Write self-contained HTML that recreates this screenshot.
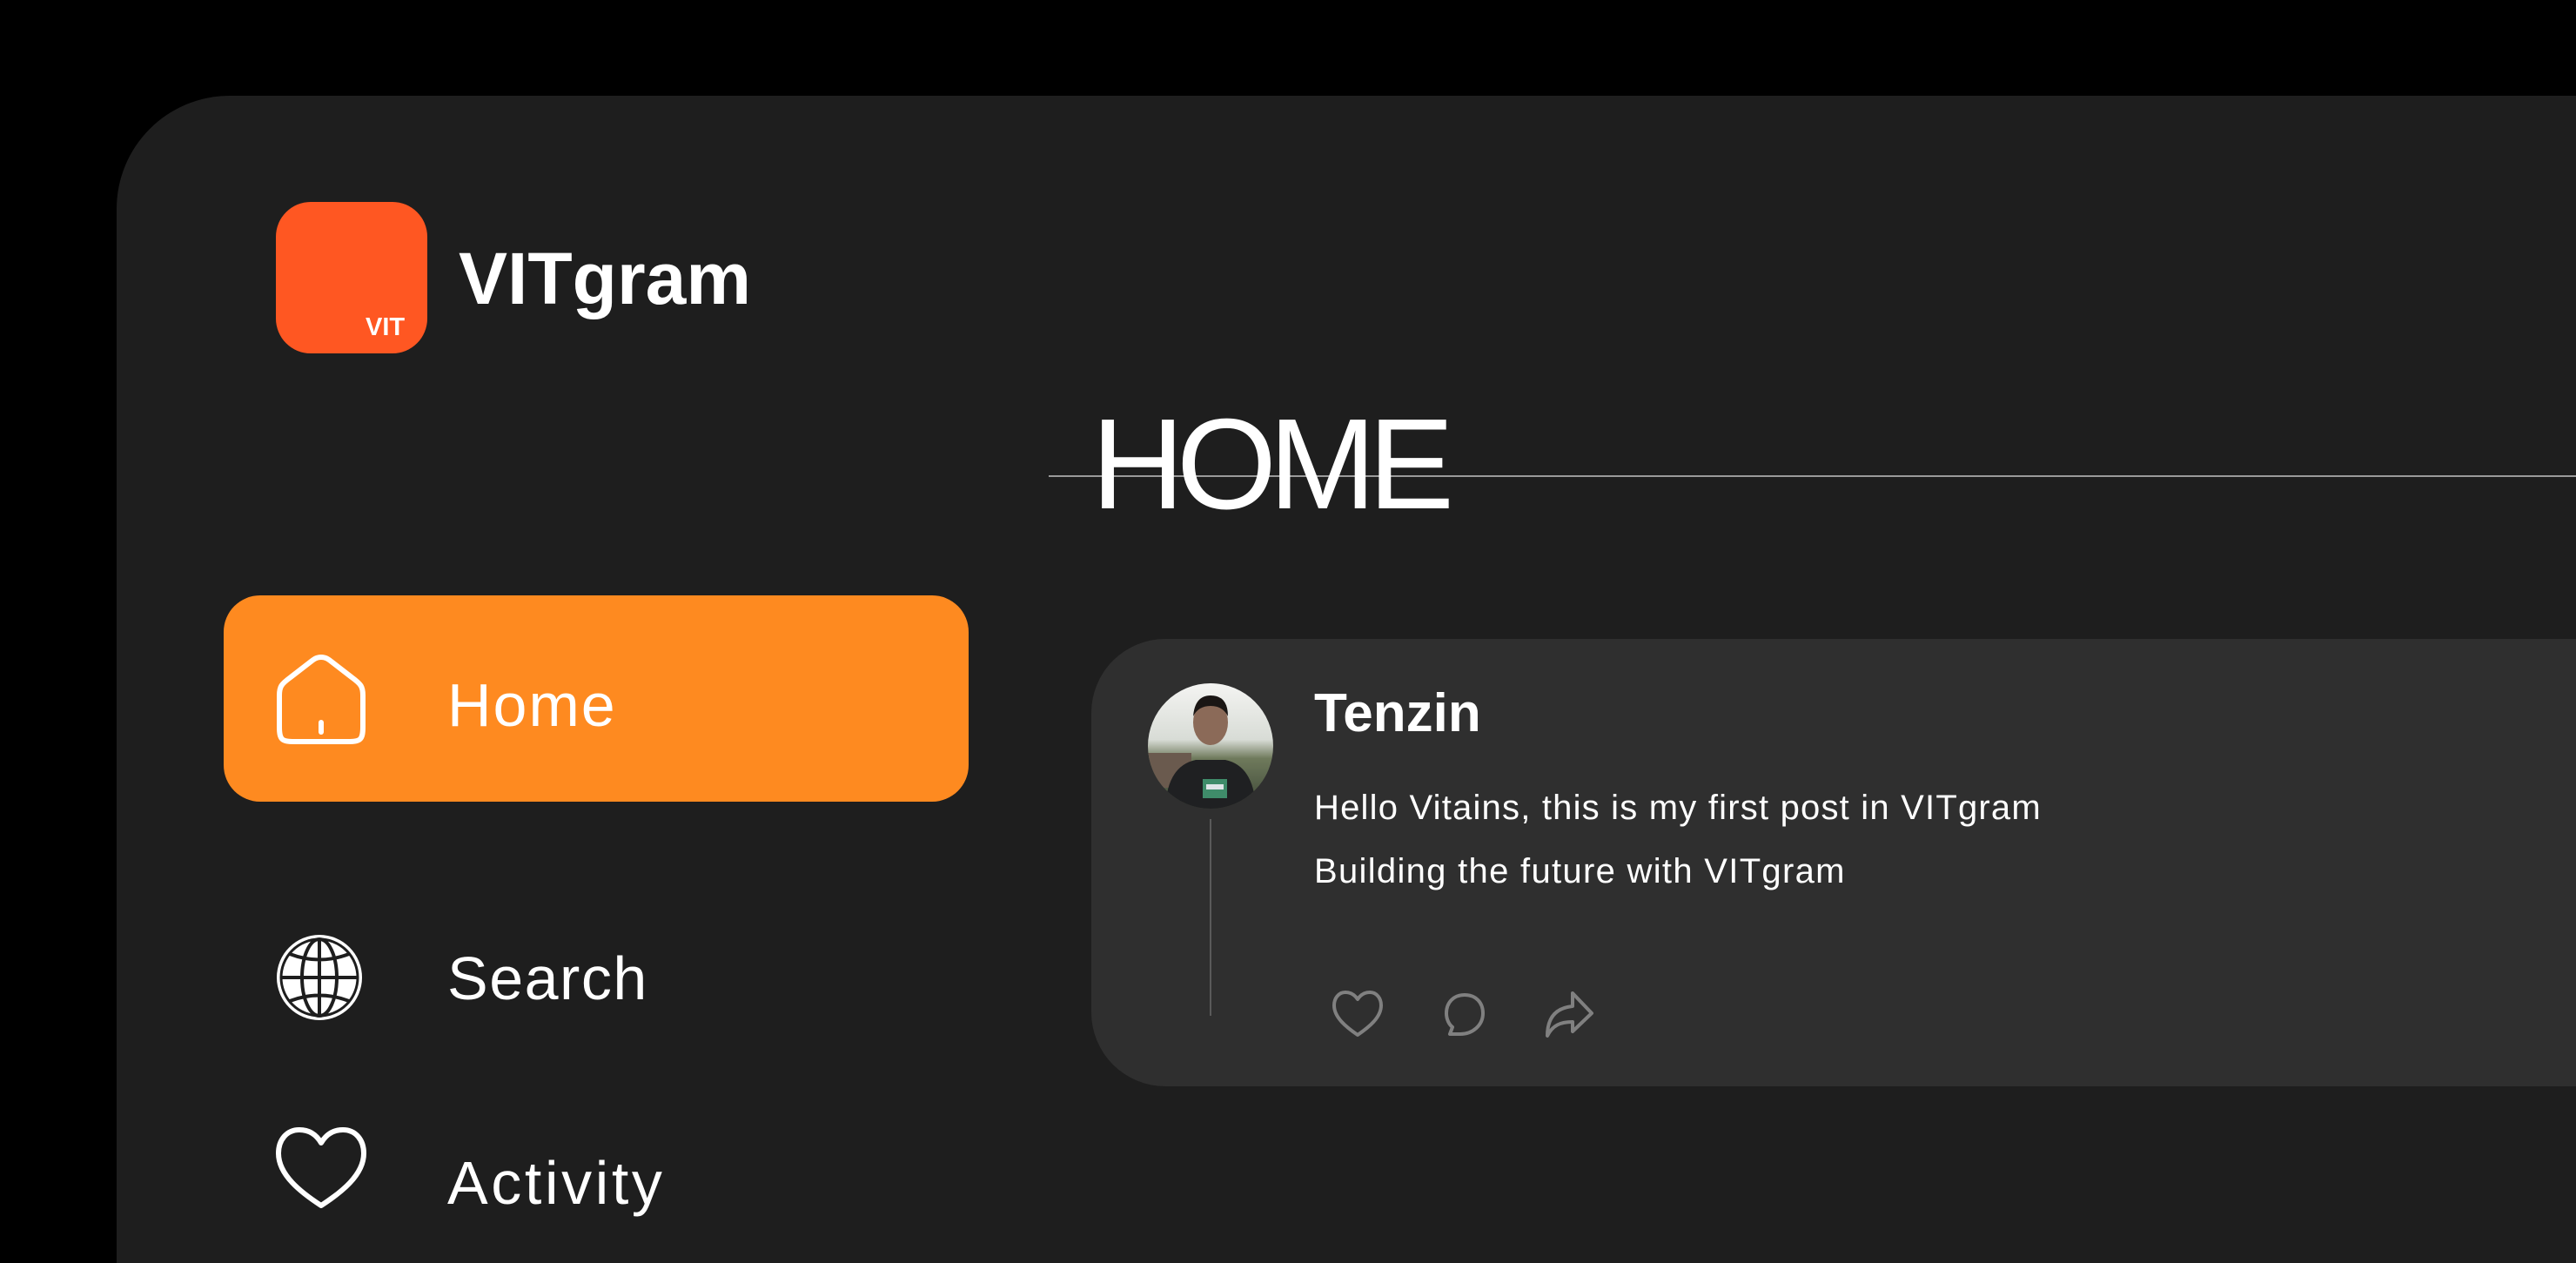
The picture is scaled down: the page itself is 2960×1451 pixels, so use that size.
<!DOCTYPE html>
<html><head><meta charset="utf-8"><style>
*{margin:0;padding:0;box-sizing:border-box}
html,body{width:2960px;height:1451px;background:#000;overflow:hidden;font-family:"Liberation Sans",sans-serif;color:#fff;position:relative}
.a{position:absolute;line-height:1;white-space:nowrap}
</style></head><body>
<div class="a" style="left:134px;top:110px;width:2826px;height:1341px;background:#1e1e1e;border-radius:130px 0 0 0"></div>
<div class="a" style="left:317px;top:232px;width:174px;height:174px;background:#ff5722;border-radius:40px"></div>
<div class="a" style="left:420px;top:362px;font-size:29px;font-weight:bold">VIT</div>
<div class="a" style="left:527px;top:278px;font-size:84px;font-weight:bold">VITgram</div>
<div class="a" style="left:1205px;top:546px;width:1755px;height:2px;background:#9a9a9a"></div>
<div class="a" style="left:1254px;top:460px;font-size:148px;letter-spacing:-9px">HOME</div>

<div class="a" style="left:257px;top:684px;width:856px;height:237px;background:#fe8a20;border-radius:42px"></div>
<svg class="a" style="left:316px;top:751px" width="106" height="106" viewBox="0 0 106 106" fill="none" stroke="#fff" stroke-width="6" stroke-linecap="round" stroke-linejoin="round">
<path d="M53 4 C47 4 44 7 40 10 L18 27 C7 35 5 38 5 48 V84 C5 99 8 101 22 101 H84 C98 101 101 99 101 84 V48 C101 38 99 35 88 27 L66 10 C62 7 59 4 53 4 Z"/>
<path d="M53 79 V90"/></svg>
<div class="a" style="left:514px;top:775px;font-size:70px;letter-spacing:2px">Home</div>

<svg class="a" style="left:317px;top:1073px" width="100" height="100" viewBox="0 0 100 100">
<circle cx="50" cy="50" r="49" fill="#fff"/>
<circle cx="50" cy="50" r="44" fill="none" stroke="#1e1e1e" stroke-width="3"/>
<g fill="none" stroke="#1e1e1e" stroke-width="4">
<ellipse cx="50" cy="50" rx="20" ry="44"/>
<path d="M50 6 V94 M6 50 H94 M16 23 Q50 36 84 23 M16 77 Q50 64 84 77"/></g></svg>
<div class="a" style="left:514px;top:1089px;font-size:70px;letter-spacing:1.5px">Search</div>

<svg class="a" style="left:316px;top:1295px" width="106" height="95" viewBox="0 0 106 95" fill="none" stroke="#fff" stroke-width="6" stroke-linejoin="round">
<path d="M53 18 C46 6 36 3 28 3 C13 3 4 15 4 30 C4 55 30 75 53 90 C76 75 102 55 102 30 C102 15 93 3 78 3 C70 3 60 6 53 18 Z"/></svg>
<div class="a" style="left:514px;top:1324px;font-size:70px;letter-spacing:3.6px">Activity</div>

<div class="a" style="left:1254px;top:734px;width:1706px;height:514px;background:#2f2f2f;border-radius:85px 0 0 85px"></div>
<svg class="a" style="left:1319px;top:785px" width="144" height="144" viewBox="0 0 144 144">
<defs><clipPath id="c"><circle cx="72" cy="72" r="72"/></clipPath>
<linearGradient id="g" x1="0" y1="0" x2="0" y2="1"><stop offset="0" stop-color="#f4f4f2"/><stop offset=".45" stop-color="#d8dcd6"/><stop offset=".6" stop-color="#6f7a5c"/><stop offset="1" stop-color="#3b4535"/></linearGradient></defs>
<g clip-path="url(#c)">
<rect width="144" height="144" fill="url(#g)"/>
<rect x="0" y="80" width="50" height="40" fill="#6a5a4e"/>
<ellipse cx="72" cy="45" rx="20" ry="26" fill="#8b6a58"/>
<path d="M52 38 Q54 14 72 14 Q92 14 92 38 Q86 26 72 26 Q58 26 52 38Z" fill="#1a1614"/>
<path d="M20 144 Q22 95 55 88 L89 88 Q122 95 124 144Z" fill="#1f2022"/>
<rect x="63" y="110" width="28" height="22" fill="#3f8c6a"/>
<rect x="67" y="116" width="20" height="6" fill="#dfe5e8"/>
</g></svg>
<div class="a" style="left:1390px;top:941px;width:2px;height:226px;background:#5a5a5a"></div>
<div class="a" style="left:1510px;top:789px;font-size:62px;font-weight:bold">Tenzin</div>
<div class="a" style="left:1510px;top:908px;font-size:40px;letter-spacing:1.2px">Hello Vitains, this is my first post in VITgram</div>
<div class="a" style="left:1510px;top:981px;font-size:40px;letter-spacing:1.3px">Building the future with VITgram</div>

<svg class="a" style="left:1530px;top:1138px" width="60" height="54" viewBox="0 0 60 54" fill="none" stroke="#808080" stroke-width="4" stroke-linejoin="round">
<path d="M30 10 C26 4 21 2 16 2 C8 2 3 9 3 17 C3 31 17 42 30 51 C43 42 57 31 57 17 C57 9 52 2 44 2 C39 2 34 4 30 10 Z"/></svg>
<svg class="a" style="left:1658px;top:1140px" width="50" height="52" viewBox="0 0 50 52" fill="none" stroke="#808080" stroke-width="4" stroke-linejoin="round">
<path d="M25 3 C12 3 4 12 4 24 C4 31 7 37 11 40 L8 48 H20 C34 48 46 38 46 24 C46 12 38 3 25 3 Z"/></svg>
<svg class="a" style="left:1773px;top:1138px" width="60" height="56" viewBox="0 0 60 56" fill="none" stroke="#808080" stroke-width="4" stroke-linejoin="round">
<path d="M34 3 L56 26 L34 47 V36 C20 36 11 40 5 52 C5 32 14 20 34 18 Z"/></svg>
</body></html>
